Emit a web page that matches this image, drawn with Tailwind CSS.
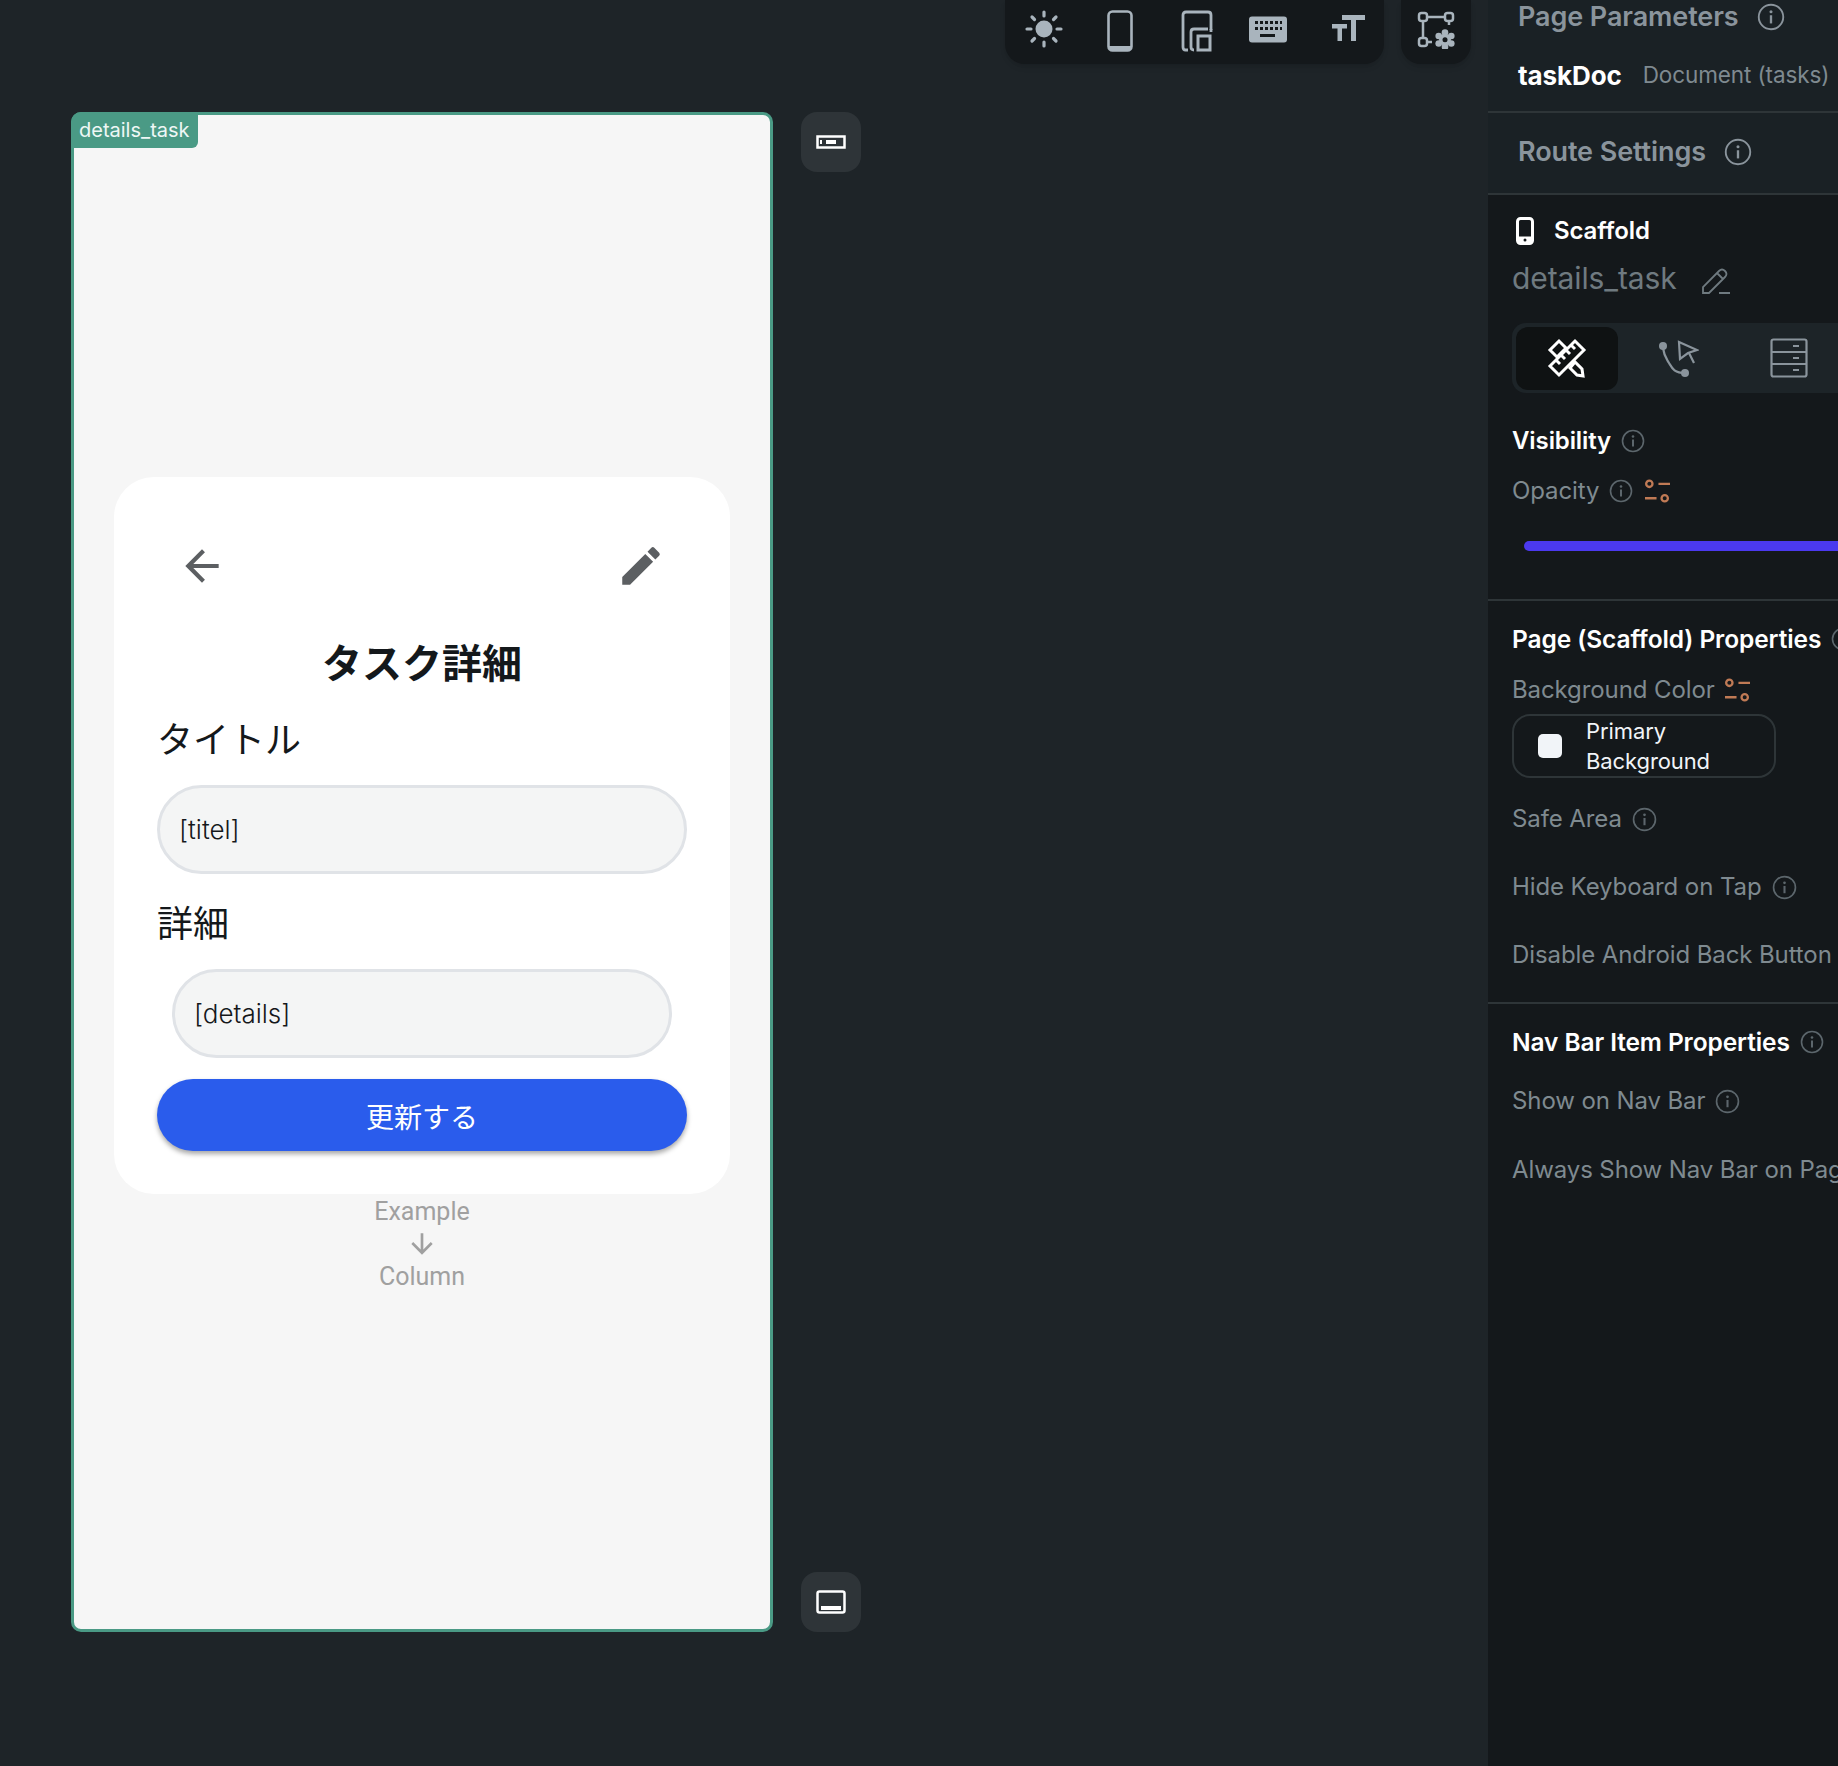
<!DOCTYPE html>
<html lang="en">
<head>
  <meta charset="UTF-8" />
  <meta name="viewport" content="width=device-width, initial-scale=1" />
  <title>details_task</title>
  <script src="https://cdn.jsdelivr.net/npm/@tailwindcss/browser@4"></script>
</head>
<body class="bg-[#1e2428] font-['Inter','Noto_Sans',sans-serif]">
  <svg class="hidden">
    <symbol id="info" viewBox="0 0 24 24">
      <circle cx="12" cy="12" r="10.5" fill="none" stroke="currentColor" stroke-width="1.6" />
      <rect x="11" y="10.5" width="2" height="7" fill="currentColor" />
      <circle cx="12" cy="7.5" r="1.3" fill="currentColor" />
    </symbol>
    <symbol id="tune" viewBox="0 0 28 26">
      <g fill="none" stroke="#c07a55" stroke-width="2.4">
        <circle cx="5.5" cy="5" r="3.3" />
        <circle cx="21.5" cy="20" r="3.3" />
        <path d="M15 5h12M1 20h12" />
      </g>
    </symbol>
  </svg>

  <div class="flex h-[1766px] w-[1838px] overflow-hidden">
    <!-- canvas -->
    <main class="relative w-[1488px] shrink-0">
      <div class="absolute left-[1005px] top-0 flex h-[64px] w-[379px] items-center rounded-b-[20px] bg-[#14181b] text-[#a9b4bd] shadow-md">
        <svg class="absolute left-[20px] top-[10px] h-[38px] w-[38px]" viewBox="0 0 38 38" fill="currentColor" stroke="currentColor">
          <circle cx="19" cy="19" r="8.5" stroke="none" />
          <path stroke-width="3.2" stroke-linecap="round" fill="none" d="M19 2v4M19 32v4M2 19h4M32 19h4M7 7l2.500 2.500M28.500 28.500 31 31M7 31l2.500-2.500M28.500 9.500 31 7" />
        </svg>
        <svg class="absolute left-[102px] top-[10px] h-[42px] w-[26px]" viewBox="0 0 26 42" fill="none" stroke="currentColor">
          <rect x="1.500" y="1.500" width="23" height="39" rx="4" stroke-width="2.600" />
          <path d="M2 38h22" stroke-width="4" />
        </svg>
        <svg class="absolute left-[176px] top-[10px] h-[43px] w-[32px]" viewBox="0 0 32 43" fill="none" stroke="currentColor" stroke-width="2.800">
          <path d="M7 40H4.500Q2 40 2 37V5q0-3 3-3h22q3 0 3 3v15" />
          <path d="M13 40q-3 0-3-3V22q0-3 3-3h14" />
          <rect x="17" y="26" width="12" height="14" stroke-width="3" />
          <path d="M30 19v3" />
        </svg>
        <svg class="absolute left-[244px] top-[16px] h-[27px] w-[38px]" viewBox="0 0 38 27">
          <rect width="38" height="26" y="0.500" rx="3" fill="currentColor" />
          <g fill="#14181b">
            <path d="M6 5h3v3H6zM11 5h3v3h-3zM16 5h3v3h-3zM21 5h3v3h-3zM26 5h3v3h-3zM31 5h2v3h-2zM6 11h3v3H6zM11 11h3v3h-3zM16 11h3v3h-3zM21 11h3v3h-3zM26 11h3v3h-3zM31 11h2v3h-2zM11 18h15v3H11z" />
          </g>
        </svg>
        <svg class="absolute left-[327px] top-[15px] h-[27px] w-[33px]" viewBox="0 0 33 27" fill="currentColor">
          <path d="M10 0h23v5h-9v21h-5V5h-9zM0 9h15v4.500h-5V26H5.500V13.500H0z" />
        </svg>
      </div>
      <div class="absolute left-[1401px] top-0 flex h-[64px] w-[70px] items-center justify-center rounded-b-[20px] bg-[#14181b] text-[#a9b4bd] shadow-md">
        <svg class="mt-[-4px] h-[38px] w-[38px]" viewBox="0 0 38 38" fill="none" stroke="currentColor" stroke-width="2.500">
          <rect x="2" y="2" width="8" height="8" rx="2.500" />
          <rect x="28" y="2" width="8" height="8" rx="2.500" />
          <rect x="2" y="27" width="8" height="8" rx="2.500" />
          <path d="M10 6h18M6 10v17M10 31h5M32 10v4" />
          <g fill="currentColor" stroke="none">
            <circle cx="28" cy="21.500" r="3.300" />
            <circle cx="28" cy="36" r="3.300" />
            <circle cx="21.700" cy="25" r="3.300" />
            <circle cx="34.300" cy="25" r="3.300" />
            <circle cx="21.700" cy="32.500" r="3.300" />
            <circle cx="34.300" cy="32.500" r="3.300" />
            <circle cx="28" cy="28.800" r="6" />
          </g>
          <circle cx="28" cy="28.800" r="2.500" fill="#14181b" stroke="none" />
        </svg>
      </div>

      <div class="flex items-start pl-[71px] pt-[112px]">
        <!-- phone frame -->
        <section class="relative flex h-[1520px] w-[702px] flex-col items-center rounded-[10px] border-[3px] border-[#4a9a85] bg-[#f6f6f6] pt-[362px]">
          <span class="absolute left-[-3px] top-[-3px] flex h-[36px] w-[127px] items-center rounded-tl-[10px] rounded-br-[6px] bg-[#4a9a85] pl-[8px] text-[20px] text-[#eef7f5]">details_task</span>

          <div class="flex h-[717px] w-[616px] flex-col rounded-[40px] bg-white px-[43px] pt-[64px] font-['Roboto','Noto_Sans_CJK_JP',sans-serif] text-[#14181b]">
            <div class="flex h-[50px] items-center justify-between pl-[20px] pr-[21px]">
              <svg class="h-[50px] w-[50px] text-[#5c5f62]" viewBox="0 0 24 24" fill="currentColor"><path d="M20 11H7.830l5.590-5.590L12 4l-8 8 8 8 1.410-1.410L7.830 13H20z" /></svg>
              <svg class="h-[50px] w-[50px] text-[#5c5f62]" viewBox="0 0 24 24" fill="currentColor"><path d="M3 17.250V21h3.750L17.810 9.940l-3.750-3.750zM20.710 7.040a1 1 0 0 0 0-1.410l-2.340-2.340a1 1 0 0 0-1.410 0l-1.830 1.830 3.750 3.750z" /></svg>
            </div>
            <h1 class="mt-[46px] text-center text-[40px] font-bold leading-[56px]">タスク詳細</h1>
            <label class="mt-[20px] text-[36px] leading-[56px]">タイトル</label>
            <div class="mt-[16px] flex h-[89px] items-center rounded-full border-[3px] border-[#e0e3e7] bg-[#f4f5f5] pl-[19px] font-['Inter',sans-serif] text-[26px] font-light">[titel]</div>
            <label class="mt-[23px] text-[36px] leading-[56px]">詳細</label>
            <div class="mx-[15px] mt-[16px] flex h-[89px] items-center rounded-full border-[3px] border-[#e0e3e7] bg-[#f4f5f5] pl-[19px] font-['Inter',sans-serif] text-[26px] font-light">[details]</div>
            <button class="mt-[21px] h-[72px] rounded-full bg-[#2a5cec] pt-[8px] text-[28px] text-white shadow-[0_3px_5px_rgba(0,0,0,0.35)]">更新する</button>
          </div>

          <div class="mt-[1px] flex flex-col items-center font-['Roboto',sans-serif] text-[25px] leading-[33px] text-[#a0a0a0]">
            <span>Example</span>
            <svg class="h-[32px] w-[32px]" viewBox="0 0 24 24" fill="currentColor"><path d="m20 12-1.410-1.410L13 16.170V4h-2v12.170l-5.580-5.590L4 12l8 8z" /></svg>
            <span>Column</span>
          </div>
        </section>

        <!-- device side buttons -->
        <div class="ml-[28px] flex h-[1520px] flex-col justify-between text-white">
          <button class="flex h-[60px] w-[60px] items-center justify-center rounded-[16px] bg-[#2e3438]">
            <svg class="h-[14px] w-[30px]" viewBox="0 0 30 14" fill="none" stroke="currentColor" stroke-width="2.500">
              <rect x="1.500" y="1.500" width="27" height="11" />
              <path d="M10 7h10M4 7h2" stroke-width="4" />
            </svg>
          </button>
          <button class="flex h-[60px] w-[60px] items-center justify-center rounded-[16px] bg-[#2e3438]">
            <svg class="h-[24px] w-[30px]" viewBox="0 0 30 24" fill="none" stroke="currentColor">
              <rect x="1.500" y="1.500" width="27" height="21" rx="2" stroke-width="2.500" />
              <path d="M5 18h20" stroke-width="4" />
            </svg>
          </button>
        </div>
      </div>
    </main>

    <!-- properties panel -->
    <aside class="flex w-[350px] shrink-0 flex-col overflow-hidden whitespace-nowrap bg-[#14181b] text-[24px] tracking-[-0.1px] text-[#7f8a90]">
      <div class="h-[113px] border-b-2 border-[#2e3538] bg-[#1a2125] pl-[30px]">
        <div class="flex h-[34px] items-center text-[27px] font-semibold text-[#8a949c]">
          Page Parameters
          <svg class="ml-[18px] h-[28px] w-[28px]"><use href="#info" /></svg>
        </div>
        <div class="mt-[21px] flex h-[40px] items-center">
          <span class="text-[26px] font-bold text-white">taskDoc</span>
          <span class="ml-[21px] text-[22.5px]">Document (tasks)</span>
        </div>
      </div>
      <div class="flex h-[82px] items-center border-b-2 border-[#2e3538] bg-[#1a2125] pb-[2px] pl-[30px] text-[27px] font-semibold text-[#8a949c]">
        Route Settings
        <svg class="ml-[18px] h-[28px] w-[28px]"><use href="#info" /></svg>
      </div>

      <div class="pl-[24px]">
        <div class="mt-[19px] flex h-[34px] items-center text-[24px] font-semibold text-white">
          <svg class="ml-[4px] mr-[20px] h-[28px] w-[18px]" viewBox="0 0 18 28" fill="none" stroke="currentColor">
            <rect x="1.500" y="1.500" width="15" height="25" rx="3" stroke-width="3" />
            <path d="M2 23h14" stroke-width="7" />
            <circle cx="9" cy="23" r="1.500" fill="#14181b" stroke="none" />
          </svg>
          Scaffold
        </div>
        <div class="mt-[12px] flex h-[36px] items-center text-[30px] text-[#6f7a80]">
          details_task
          <svg class="ml-[24px] mt-[6px] h-[28px] w-[30px]" viewBox="0 0 30 28" fill="none" stroke="currentColor" stroke-width="1.800">
            <path d="M2 26v-6L18 4q3-3 6 0t0 6L8 26zM16 6l6 6M18 26h11" />
          </svg>
        </div>

        <div class="relative mt-[27px] flex h-[70px] items-center rounded-l-[14px] bg-[#1d2428] pl-[4px] text-[#8a949c]">
          <div class="flex h-[63px] w-[102px] items-center justify-center rounded-[12px] bg-[#0f1213] text-white">
            <svg class="h-[40px] w-[40px]" viewBox="0 0 40 40" fill="none" stroke="currentColor" stroke-width="3">
              <path d="M3 28 28 3l9 9-25 25zM9 22l4 4M14 17l4 4M19 12l4 4M24 7l4 4" />
              <path d="M12 3 3 12l7 7 9-9zM23 30l7 7 6 1-1-7-7-7z" />
            </svg>
          </div>
          <svg class="ml-[39px] h-[40px] w-[42px]" viewBox="0 0 42 40" fill="none" stroke="currentColor" stroke-width="2.200">
            <circle cx="6" cy="8" r="4" fill="currentColor" stroke="none" />
            <circle cx="28" cy="35" r="4" fill="currentColor" stroke="none" />
            <path d="M6 10c1 8 3 10 6 15s5 10 16 10" />
            <path d="M22 4 40 12l-9 3-8 6zM32 15l5 10" />
          </svg>
          <svg class="ml-[71px] h-[40px] w-[38px]" viewBox="0 0 38 40" fill="none" stroke="currentColor" stroke-width="2.200">
            <rect x="1.500" y="1.500" width="35" height="37" rx="2" />
            <path d="M1.500 14h35M1.500 26h35M23 8h6M23 20h6M23 32h6" />
          </svg>
        </div>

        <div class="mt-[31px] flex h-[34px] items-center text-[24px] font-semibold text-white">
          Visibility
          <svg class="ml-[10px] h-[24px] w-[24px] text-[#5c666c]"><use href="#info" /></svg>
        </div>
        <div class="mt-[16px] flex h-[34px] items-center">
          Opacity
          <svg class="ml-[10px] h-[24px] w-[24px] text-[#5c666c]"><use href="#info" /></svg>
          <svg class="ml-[11px] h-[25px] w-[27px]"><use href="#tune" /></svg>
        </div>
        <div class="ml-[12px] mt-[33px] h-[10px] rounded-l-full bg-[#4b39ef]"></div>
      </div>

      <div class="mt-[48px] border-t-2 border-[#2e3538] pl-[24px]">
        <div class="mt-[21px] flex h-[34px] items-center text-[24.5px] font-semibold text-white">
          Page (Scaffold) Properties
          <svg class="ml-[10px] h-[24px] w-[24px] shrink-0 text-[#5c666c]"><use href="#info" /></svg>
        </div>
        <div class="mt-[17px] flex h-[34px] items-center">
          Background Color
          <svg class="ml-[9px] h-[25px] w-[27px]"><use href="#tune" /></svg>
        </div>
        <div class="mt-[7px] flex h-[64px] w-[264px] items-center rounded-[18px] border-2 border-[#2e3538] pl-[24px] text-[#f1f4f8]">
          <span class="h-[24px] w-[24px] rounded-[5px] bg-[#f1f4f8]"></span>
          <span class="ml-[24px] whitespace-normal text-[22px] leading-[30px]">Primary<br />Background</span>
        </div>
        <div class="mt-[24px] flex h-[34px] items-center">
          Safe Area
          <svg class="ml-[10px] h-[25px] w-[25px] text-[#5c666c]"><use href="#info" /></svg>
        </div>
        <div class="mt-[34px] flex h-[34px] items-center">
          Hide Keyboard on Tap
          <svg class="ml-[10px] h-[25px] w-[25px] text-[#5c666c]"><use href="#info" /></svg>
        </div>
        <div class="mt-[34px] flex h-[34px] items-center">Disable Android Back Button</div>
      </div>

      <div class="mt-[30px] border-t-2 border-[#2e3538] pl-[24px]">
        <div class="mt-[21px] flex h-[34px] items-center text-[24.5px] font-semibold text-white">
          Nav Bar Item Properties
          <svg class="ml-[10px] h-[24px] w-[24px] text-[#5c666c]"><use href="#info" /></svg>
        </div>
        <div class="mt-[25px] flex h-[34px] items-center">
          Show on Nav Bar
          <svg class="ml-[10px] h-[25px] w-[25px] text-[#5c666c]"><use href="#info" /></svg>
        </div>
        <div class="mt-[35px] flex h-[34px] items-center">Always Show Nav Bar on Page</div>
      </div>
    </aside>
  </div>
</body>
</html>
